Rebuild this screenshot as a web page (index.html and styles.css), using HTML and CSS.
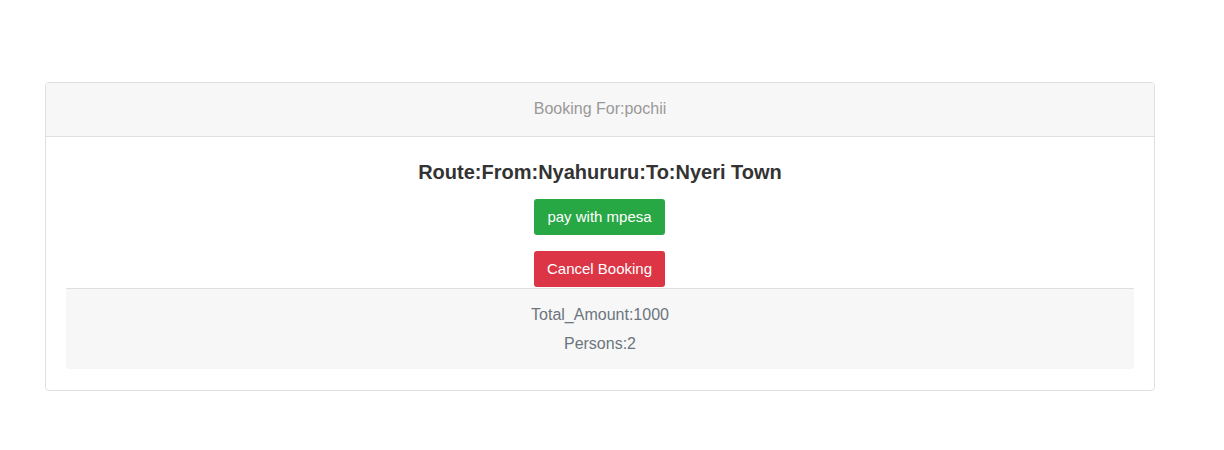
FILE: index.html
```html
<!DOCTYPE html>
<html lang="en">
<head>
<meta charset="utf-8">
<title>Booking</title>
<link rel="stylesheet" href="styles.css">
</head>
<body>
<div class="page">
  <div class="card">
    <div class="card-header">Booking For:pochii</div>
    <div class="card-body">
      <h4 class="route">Route:From:Nyahururu:To:Nyeri Town</h4>
      <div class="actions">
        <button class="btn btn-green">pay with mpesa</button>
        <button class="btn btn-red">Cancel Booking</button>
      </div>
      <div class="card-footer">
        <p>Total_Amount:1000</p>
        <p>Persons:2</p>
      </div>
    </div>
  </div>
</div>
</body>
</html>
```

FILE: styles.css
```css
* { box-sizing: border-box; }
html, body {
  margin: 0;
  padding: 0;
  background: #fff;
  font-family: "Liberation Sans", Arial, sans-serif;
  font-size: 16px;
  color: #212529;
}
.page {
  padding: 82px 0 0 45px;
}
.card {
  width: 1110px;
  border: 1px solid #dfdfdf;
  border-radius: 4px;
  background: #fff;
}
.card-header {
  background: #f7f7f7;
  border-bottom: 1px solid #dfdfdf;
  border-radius: 3px 3px 0 0;
  text-align: center;
  color: #999;
  font-size: 16px;
  line-height: 24px;
  padding: 14px 20px 15px;
}
.card-body {
  padding: 20px 20px 21px;
  text-align: center;
}
.route {
  margin: 0;
  font-size: 20px;
  line-height: 30px;
  font-weight: bold;
  color: #333;
}
.actions {
  display: flex;
  flex-direction: column;
  align-items: center;
  gap: 16px;
  margin-top: 12px;
}
.btn {
  width: 131px;
  height: 36px;
  border: none;
  border-radius: 3px;
  color: #fff;
  font-family: "Liberation Sans", Arial, sans-serif;
  font-size: 15px;
  padding: 0 0 1px;
  margin-left: -1px;
  cursor: pointer;
}
.btn-green { background: #28a745; }
.btn-red { background: #dc3545; }
.card-footer {
  margin-top: 1px;
  background: #f7f7f7;
  border-top: 1px solid #dfdfdf;
  border-radius: 0 0 3px 3px;
  padding: 11px 0 11px;
  color: #6c757d;
  font-size: 16px;
}
.card-footer p {
  margin: 0;
  line-height: 29px;
}
```
